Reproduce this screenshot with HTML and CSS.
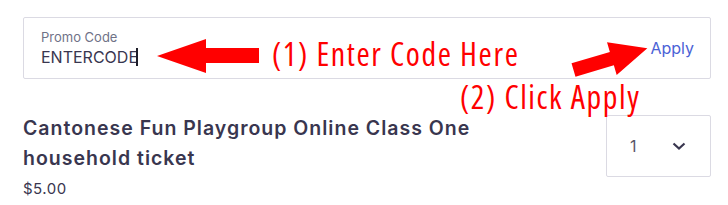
FILE: index.html
```html
<!DOCTYPE html>
<html lang="en">
<head>
    <meta charset="UTF-8">
    <title>Promo code</title>
    <link rel="stylesheet" href="styles.css">
</head>
<body>
    <div class="checkout">
        <div class="promo">
            <div class="promo-field">
                <div class="promo-label">Promo Code</div>
                <div class="promo-value">ENTERCODE<span class="caret"></span></div>
            </div>
            <a class="apply" href="#">Apply</a>
        </div>

        <div class="ticket">
            <div class="ticket-info">
                <h2 class="ticket-name">Cantonese Fun Playgroup Online Class One household ticket</h2>
                <div class="ticket-price">$5.00</div>
            </div>
            <div class="qty">
                <span>1</span>
                <svg class="chevron" viewBox="0 0 14 8">
                    <path d="M1.5 1.5 7 6.5 12.5 1.5"/>
                </svg>
            </div>
        </div>

        <!-- annotations drawn over the form -->
        <svg class="arrows" viewBox="0 0 728 205">
            <polygon points="157,56 206,39 206,48 259,48 259,63 206,63 206,73"/>
            <polygon transform="translate(573.5,70) rotate(-16.5)" points="0,-7 40,-7 40,-17 77,0 40,17 40,7 0,7"/>
        </svg>
        <div class="note note-1">(1) Enter Code Here</div>
        <div class="note note-2">(2) Click Apply</div>
    </div>
</body>
</html>
```

FILE: styles.css
```css
* {
    margin: 0;
    padding: 0;
    box-sizing: border-box;
}

body {
    background: #fff;
    font-family: 'Inter', 'Liberation Sans', sans-serif;
    color: #39364f;
}

.checkout {
    position: relative;
    width: 728px;
    height: 205px;
    padding: 17px 17px 0 23px;
}

.promo {
    display: flex;
    align-items: center;
    justify-content: space-between;
    height: 62px;
    padding: 0 16px 0 17px;
    border: 1px solid #dbdae3;
    border-radius: 2px;
}

.promo-label {
    font-size: 13px;
    line-height: 16px;
    color: #6f7287;
}

.promo-value {
    display: flex;
    align-items: center;
    font-size: 16px;
    line-height: 20px;
    margin-top: 2px;
}

.caret {
    width: 2px;
    height: 18px;
    margin-left: -2px;
    background: #1e1e2a;
}

.apply {
    font-size: 16px;
    color: #4b62d6;
    text-decoration: none;
}

.ticket {
    display: flex;
    justify-content: space-between;
    margin-top: 36px;
}

.ticket-info {
    width: 540px;
    margin-top: -2px;
}

.ticket-name {
    font-size: 19.5px;
    font-weight: 600;
    letter-spacing: 1px;
    line-height: 30px;
}

.ticket-price {
    font-size: 15px;
    letter-spacing: 0.5px;
    line-height: 22px;
    margin-top: 5px;
}

.qty {
    display: flex;
    align-items: center;
    justify-content: space-between;
    width: 105px;
    height: 62px;
    padding: 0 24px 0 23px;
    border: 1px solid #dbdae3;
    border-radius: 2px;
    font-size: 16px;
    color: #585668;
}

.chevron {
    width: 14px;
    height: 8px;
    fill: none;
    stroke: #39364f;
    stroke-width: 2.2;
}

.arrows {
    position: absolute;
    top: 0;
    left: 0;
    width: 728px;
    height: 205px;
    fill: #ff0000;
}

.note {
    position: absolute;
    font-family: 'Open Sans', sans-serif;
    font-stretch: condensed;
    font-size: 32px;
    letter-spacing: 1.6px;
    line-height: 36px;
    color: #ff0000;
    white-space: nowrap;
}

.note-1 {
    left: 272px;
    top: 36px;
}

.note-2 {
    left: 460px;
    top: 79px;
}
```
